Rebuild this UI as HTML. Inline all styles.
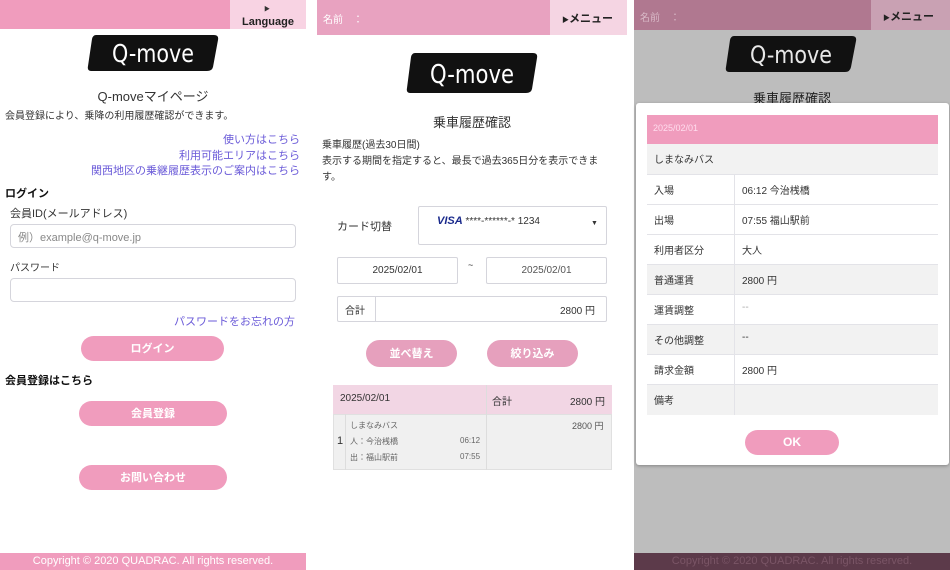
<!DOCTYPE html>
<html><head><meta charset="utf-8">
<style>
*{margin:0;padding:0;box-sizing:border-box}
body{width:950px;height:570px;background:#fff;position:relative;overflow:hidden;font-family:"Liberation Sans","Noto Sans CJK JP",sans-serif;color:#333}
.a{position:absolute}
.t{position:absolute;white-space:nowrap}
.btn{position:absolute;background:#f09cbd;color:#fff;border-radius:14px;text-align:center;font-size:11px;font-weight:bold}
.inp{position:absolute;border:1px solid #d5d5dc;border-radius:4px;background:#fff}
.lnk{color:#6a5ad8;font-size:11px;right:6px}
.row{position:absolute;left:647px;width:291px;height:30px;border-bottom:1px solid #e3e3e8;font-size:10px}
.row span{position:absolute;top:7px}
</style></head><body>

<!-- Panel 1 -->
<div class="a" style="left:0;top:0;width:306px;height:29px;background:#f09cbd"></div>
<div class="a" style="left:230px;top:0;width:76px;height:29px;background:#f8d3e3"></div>
<div class="t" style="left:264px;top:4px;font-size:6px">▶</div>
<div class="t" style="left:242px;top:16px;font-size:11px;font-weight:bold;color:#222">Language</div>
<svg class="a" style="left:86px;top:33px" width="134" height="40" viewBox="0 0 134 40"><path d="M10 2 H128 Q133 2 132 7 L127 34 Q126 38 121 38 H5 Q1 38 2 33 L6 6 Q7 2 10 2Z" fill="#111"/><text x="67" y="29" text-anchor="middle" fill="#fff" font-size="25" font-family="DejaVu Sans" textLength="82" lengthAdjust="spacingAndGlyphs">Q-move</text></svg>
<div class="t" style="left:0;width:306px;text-align:center;top:86px;font-size:13px">Q-moveマイページ</div>
<div class="t" style="left:5px;top:107px;font-size:10px">会員登録により、乗降の利用履歴確認ができます。</div>
<div class="t lnk" style="right:auto;left:0;width:300px;text-align:right;top:131px">使い方はこちら</div>
<div class="t lnk" style="right:auto;left:0;width:300px;text-align:right;top:147px">利用可能エリアはこちら</div>
<div class="t lnk" style="right:auto;left:0;width:300px;text-align:right;top:162px">関西地区の乗継履歴表示のご案内はこちら</div>
<div class="t" style="left:5px;top:185px;font-size:11px;font-weight:bold;color:#111">ログイン</div>
<div class="t" style="left:10px;top:205px;font-size:11px">会員ID(メールアドレス)</div>
<div class="inp" style="left:10px;top:224px;width:286px;height:24px"></div>
<div class="t" style="left:18px;top:229px;font-size:11px;color:#888">例）example@q-move.jp</div>
<div class="t" style="left:10px;top:259px;font-size:10px">パスワード</div>
<div class="inp" style="left:10px;top:278px;width:286px;height:24px"></div>
<div class="t lnk" style="right:auto;left:0;width:295px;text-align:right;top:313px">パスワードをお忘れの方</div>
<div class="btn" style="left:81px;top:336px;width:143px;height:25px;line-height:27px">ログイン</div>
<div class="t" style="left:5px;top:372px;font-size:11px;font-weight:bold;color:#111">会員登録はこちら</div>
<div class="btn" style="left:79px;top:401px;width:148px;height:25px;line-height:27px">会員登録</div>
<div class="btn" style="left:79px;top:465px;width:148px;height:25px;line-height:27px">お問い合わせ</div>
<div class="a" style="left:0;top:553px;width:306px;height:17px;background:#f09cbd;color:#fff;font-size:11px;text-align:center;line-height:17px">Copyright © 2020 QUADRAC. All rights reserved.</div>

<!-- Panel 2 -->
<div class="a" style="left:317px;top:0;width:310px;height:35px;background:#e8a2c0"></div>
<div class="t" style="left:323px;top:11px;font-size:10px;color:#fff">名前　：</div>
<div class="a" style="left:550px;top:0;width:77px;height:35px;background:#f5d5e3"></div>
<div class="t" style="left:562px;top:10px;font-size:11px;font-weight:bold;color:#222"><span style="font-size:7px">▶</span>メニュー</div>
<svg class="a" style="left:405px;top:51px" width="134" height="44" viewBox="0 0 134 44"><path d="M10 2 H128 Q133 2 132 7 L127 38 Q126 42 121 42 H5 Q1 42 2 37 L6 6 Q7 2 10 2Z" fill="#111"/><text x="67" y="32" text-anchor="middle" fill="#fff" font-size="26" font-family="DejaVu Sans" textLength="84" lengthAdjust="spacingAndGlyphs">Q-move</text></svg>
<div class="t" style="left:317px;width:310px;text-align:center;top:112px;font-size:13px">乗車履歴確認</div>
<div class="t" style="left:322px;top:136px;font-size:10px">乗車履歴(過去30日間)</div>
<div class="t" style="left:322px;top:152px;font-size:10px">表示する期間を指定すると、最長で過去365日分を表示できま</div>
<div class="t" style="left:322px;top:168px;font-size:10px">す。</div>
<div class="t" style="left:337px;top:218px;font-size:11px">カード切替</div>
<div class="inp" style="left:418px;top:206px;width:189px;height:39px;border-radius:2px"></div>
<div class="t" style="left:437px;top:215px;font-size:10px"><b style="color:#1a2a8c;font-style:italic;font-size:11px">VISA</b> ****-******-* 1234</div>
<div class="t" style="left:591px;top:220px;font-size:7px">▼</div>
<div class="inp" style="left:337px;top:257px;width:121px;height:27px;border-radius:2px;text-align:center;font-size:10px;line-height:25px">2025/02/01</div>
<div class="t" style="left:468px;top:260px;font-size:9px">~</div>
<div class="inp" style="left:486px;top:257px;width:121px;height:27px;border-radius:2px;text-align:center;font-size:10px;line-height:25px;color:#555">2025/02/01</div>
<div class="inp" style="left:337px;top:296px;width:270px;height:26px;border-radius:2px"></div>
<div class="a" style="left:375px;top:296px;width:1px;height:26px;background:#d5d5dc"></div>
<div class="t" style="left:345px;top:302px;font-size:10px">合計</div>
<div class="t" style="left:560px;top:302px;font-size:10px">2800 円</div>
<div class="btn" style="left:366px;top:340px;width:91px;height:27px;line-height:28px;background:#e6a0bd">並べ替え</div>
<div class="btn" style="left:487px;top:340px;width:91px;height:27px;line-height:28px;background:#e6a0bd">絞り込み</div>
<div class="a" style="left:333px;top:385px;width:279px;height:29px;background:#f2d6e4"></div>
<div class="t" style="left:340px;top:393px;font-size:10px">2025/02/01</div>
<div class="t" style="left:492px;top:393px;font-size:10px">合計</div>
<div class="t" style="left:570px;top:393px;font-size:10px">2800 円</div>
<div class="a" style="left:333px;top:414px;width:279px;height:56px;background:#f0f0f0;border:1px solid #e0e0e0"></div>
<div class="a" style="left:345px;top:414px;width:1px;height:56px;background:#ddd"></div>
<div class="a" style="left:486px;top:385px;width:1px;height:85px;background:#ddd"></div>
<div class="t" style="left:337px;top:435px;font-size:11px">1</div>
<div class="t" style="left:350px;top:420px;font-size:8px;color:#666">しまなみバス</div>
<div class="t" style="left:350px;top:436px;font-size:8px;color:#666">人：今治桟橋</div>
<div class="t" style="left:460px;top:436px;font-size:8px;color:#666">06:12</div>
<div class="t" style="left:350px;top:452px;font-size:8px;color:#666">出：福山駅前</div>
<div class="t" style="left:460px;top:452px;font-size:8px;color:#666">07:55</div>
<div class="t" style="left:572px;top:419px;font-size:9px;color:#555">2800 円</div>

<!-- Panel 3 -->
<div class="a" style="left:634px;top:0;width:316px;height:570px;background:#bdbdbd"></div>
<div class="a" style="left:634px;top:0;width:316px;height:30px;background:#b07890"></div>
<div class="t" style="left:640px;top:9px;font-size:10px;color:#d8b8c6">名前　：</div>
<div class="a" style="left:871px;top:0;width:79px;height:30px;background:#c9a1b3"></div>
<div class="t" style="left:883px;top:8px;font-size:11px;font-weight:bold;color:#222"><span style="font-size:7px">▶</span>メニュー</div>
<svg class="a" style="left:724px;top:35px" width="134" height="38" viewBox="0 0 134 38"><path d="M10 1 H128 Q133 1 132 6 L127 32 Q126 37 121 37 H5 Q1 37 2 32 L6 5 Q7 1 10 1Z" fill="#111"/><text x="67" y="28" text-anchor="middle" fill="#e8e8e8" font-size="24" font-family="DejaVu Sans" textLength="82" lengthAdjust="spacingAndGlyphs">Q-move</text></svg>
<div class="t" style="left:634px;width:316px;text-align:center;top:88px;font-size:13px;color:#222">乗車履歴確認</div>
<div class="a" style="left:636px;top:103px;width:313px;height:362px;background:#fff;border-radius:3px;box-shadow:0 1px 3px rgba(0,0,0,.3)"></div>
<div class="a" style="left:647px;top:115px;width:291px;height:29px;background:#f09cbd"></div>
<div class="t" style="left:653px;top:123px;font-size:9px;color:#fde">2025/02/01</div>
<div class="row" style="top:144px;height:31px;background:#f2f2f2"><span style="left:7px">しまなみバス</span></div>
<div class="row" style="top:175px;background:#fff"><span style="left:7px">入場</span><span style="left:95px">06:12 今治桟橋</span></div>
<div class="row" style="top:205px;background:#fff"><span style="left:7px">出場</span><span style="left:95px">07:55 福山駅前</span></div>
<div class="row" style="top:235px;background:#fff"><span style="left:7px">利用者区分</span><span style="left:95px">大人</span></div>
<div class="row" style="top:265px;background:#f2f2f2"><span style="left:7px">普通運賃</span><span style="left:95px">2800 円</span></div>
<div class="row" style="top:295px;background:#fff"><span style="left:7px">運賃調整</span><span style="left:95px;color:#aaa">--</span></div>
<div class="row" style="top:325px;background:#f2f2f2"><span style="left:7px">その他調整</span><span style="left:95px">--</span></div>
<div class="row" style="top:355px;background:#fff"><span style="left:7px">請求金額</span><span style="left:95px">2800 円</span></div>
<div class="row" style="top:385px;background:#f2f2f2;border:none"><span style="left:7px">備考</span></div>
<div class="a" style="left:734px;top:175px;width:1px;height:240px;background:#e3e3e8"></div>
<div class="btn" style="left:745px;top:430px;width:94px;height:25px;line-height:25px;font-size:12px">OK</div>
<div class="a" style="left:634px;top:553px;width:316px;height:17px;background:#5c3a4a;color:#7a5566;font-size:11px;text-align:center;line-height:17px">Copyright © 2020 QUADRAC. All rights reserved.</div>
</body></html>
